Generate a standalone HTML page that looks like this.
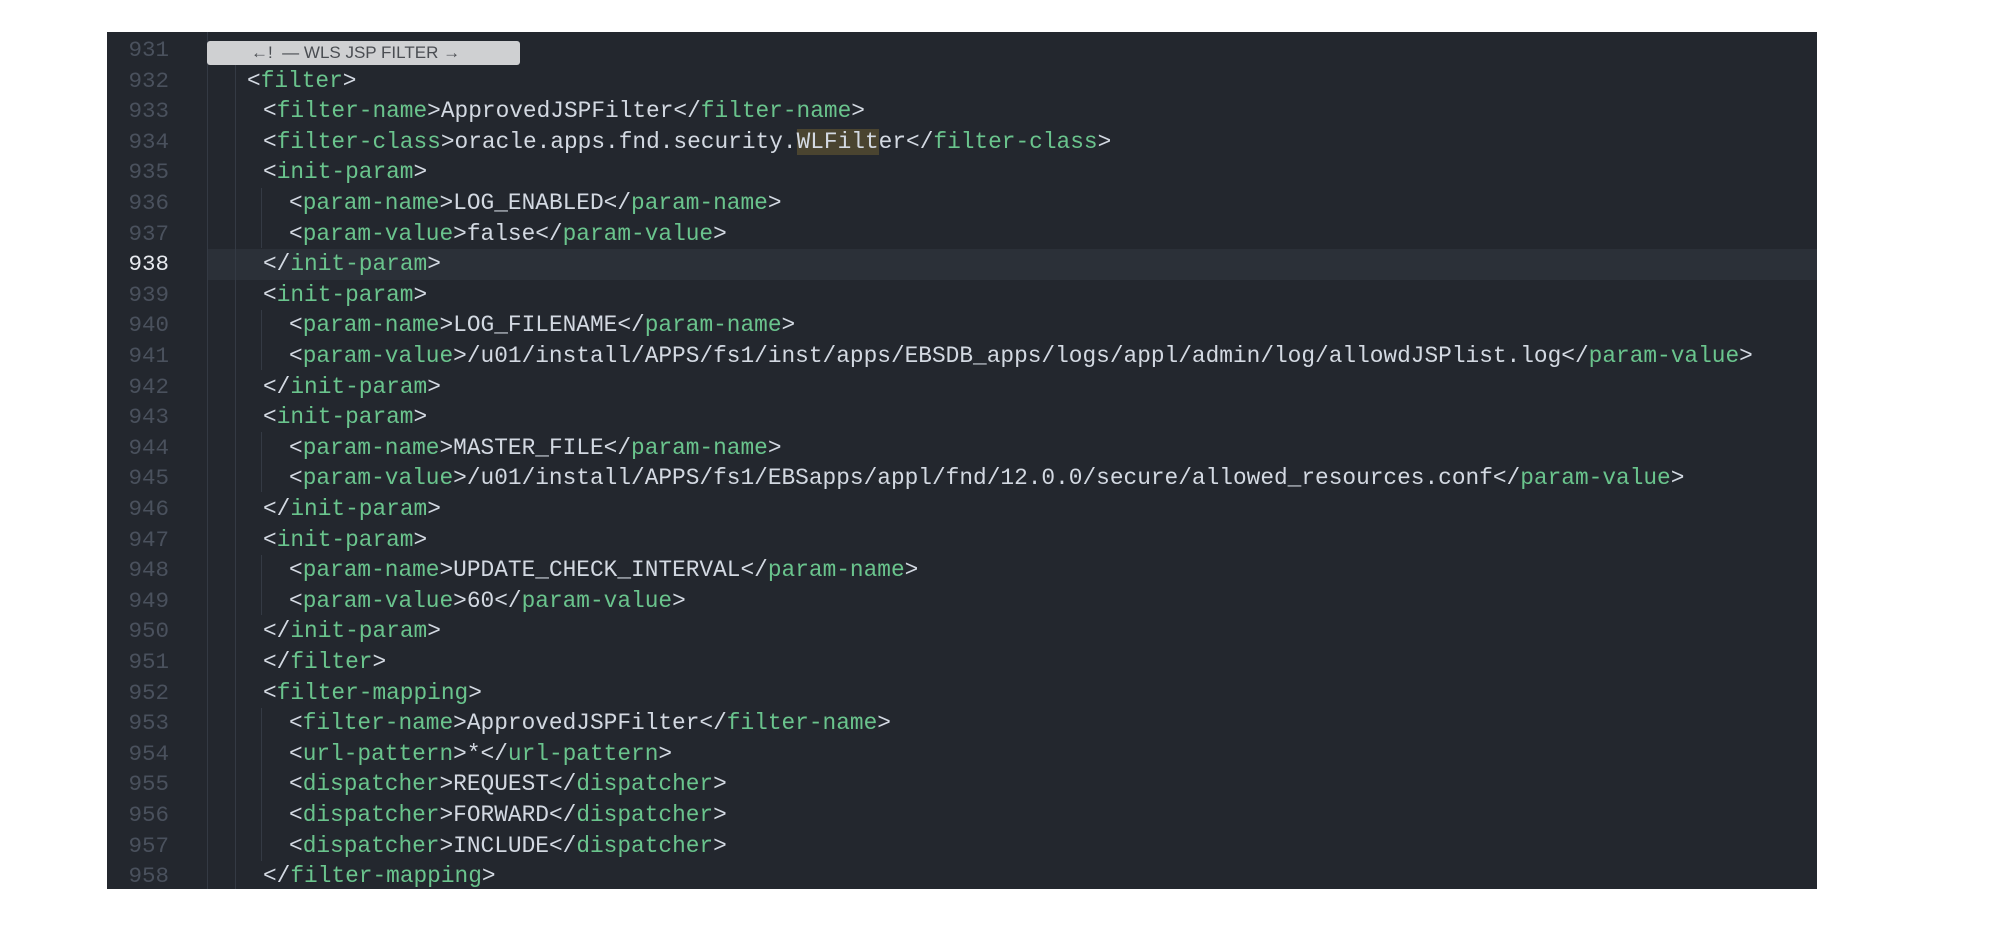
<!DOCTYPE html>
<html><head><meta charset="utf-8"><style>
html,body{margin:0;padding:0;background:#fff;width:2000px;height:937px;overflow:hidden}
#ed{position:absolute;left:107px;top:32px;width:1710px;height:857px;background:#23272e;overflow:hidden}
.ln{position:absolute;width:62px;text-align:right;left:0;color:#4a515d;font:22.5px/30.6px "Liberation Mono",monospace}
.cur{color:#e6e9ee}
.c{position:absolute;white-space:pre;font:22.8px/30.6px "Liberation Mono",monospace;color:#d3d9e2;letter-spacing:0}
.t{color:#6ac48d}
.hl{background:#4a4430}
.g{position:absolute;width:1px;background:#343a44}
#row{position:absolute;left:100px;right:0;top:217.2px;height:30.6px;background:#2b3038}
#fold{position:absolute;left:100px;top:9px;width:313px;height:24px;background:#cfd0d2;border-radius:3px;color:#4a4d52;font:17px/24px "Liberation Sans",sans-serif;padding-left:44px;box-sizing:border-box}
</style></head><body>
<div id="ed">
<div id="row"></div>
<div class="g" style="left:100px;top:0;height:857px"></div>
<div class="g" style="left:128px;top:30px;height:827px"></div>
<div class="g" style="left:154px;top:156px;height:60px"></div>
<div class="g" style="left:154px;top:278px;height:60px"></div>
<div class="g" style="left:154px;top:400px;height:60px"></div>
<div class="g" style="left:154px;top:523px;height:60px"></div>
<div class="g" style="left:154px;top:676px;height:153px"></div>
<div id="fold">←!&nbsp;&nbsp;— WLS JSP FILTER →</div>
<div class="ln" style="top:3px">931</div>
<div class="ln" style="top:33.6px">932</div>
<div class="ln" style="top:64.2px">933</div>
<div class="ln" style="top:94.8px">934</div>
<div class="ln" style="top:125.4px">935</div>
<div class="ln" style="top:156px">936</div>
<div class="ln" style="top:186.6px">937</div>
<div class="ln cur" style="top:217.2px">938</div>
<div class="ln" style="top:247.8px">939</div>
<div class="ln" style="top:278.4px">940</div>
<div class="ln" style="top:309px">941</div>
<div class="ln" style="top:339.6px">942</div>
<div class="ln" style="top:370.2px">943</div>
<div class="ln" style="top:400.8px">944</div>
<div class="ln" style="top:431.4px">945</div>
<div class="ln" style="top:462px">946</div>
<div class="ln" style="top:492.6px">947</div>
<div class="ln" style="top:523.2px">948</div>
<div class="ln" style="top:553.8px">949</div>
<div class="ln" style="top:584.4px">950</div>
<div class="ln" style="top:615px">951</div>
<div class="ln" style="top:645.6px">952</div>
<div class="ln" style="top:676.2px">953</div>
<div class="ln" style="top:706.8px">954</div>
<div class="ln" style="top:737.4px">955</div>
<div class="ln" style="top:768px">956</div>
<div class="ln" style="top:798.6px">957</div>
<div class="ln" style="top:829.2px">958</div>

<div class="c" style="left:140px;top:33.6px">&lt;<span class="t">filter</span>&gt;</div>
<div class="c" style="left:156px;top:64.2px">&lt;<span class="t">filter-name</span>&gt;ApprovedJSPFilter&lt;/<span class="t">filter-name</span>&gt;</div>
<div class="c" style="left:156px;top:94.8px">&lt;<span class="t">filter-class</span>&gt;oracle.apps.fnd.security.<span class="hl">WLFilt</span>er&lt;/<span class="t">filter-class</span>&gt;</div>
<div class="c" style="left:156px;top:125.4px">&lt;<span class="t">init-param</span>&gt;</div>
<div class="c" style="left:182px;top:156px">&lt;<span class="t">param-name</span>&gt;LOG_ENABLED&lt;/<span class="t">param-name</span>&gt;</div>
<div class="c" style="left:182px;top:186.6px">&lt;<span class="t">param-value</span>&gt;false&lt;/<span class="t">param-value</span>&gt;</div>
<div class="c" style="left:156px;top:217.2px">&lt;/<span class="t">init-param</span>&gt;</div>
<div class="c" style="left:156px;top:247.8px">&lt;<span class="t">init-param</span>&gt;</div>
<div class="c" style="left:182px;top:278.4px">&lt;<span class="t">param-name</span>&gt;LOG_FILENAME&lt;/<span class="t">param-name</span>&gt;</div>
<div class="c" style="left:182px;top:309px">&lt;<span class="t">param-value</span>&gt;/u01/install/APPS/fs1/inst/apps/EBSDB_apps/logs/appl/admin/log/allowdJSPlist.log&lt;/<span class="t">param-value</span>&gt;</div>
<div class="c" style="left:156px;top:339.6px">&lt;/<span class="t">init-param</span>&gt;</div>
<div class="c" style="left:156px;top:370.2px">&lt;<span class="t">init-param</span>&gt;</div>
<div class="c" style="left:182px;top:400.8px">&lt;<span class="t">param-name</span>&gt;MASTER_FILE&lt;/<span class="t">param-name</span>&gt;</div>
<div class="c" style="left:182px;top:431.4px">&lt;<span class="t">param-value</span>&gt;/u01/install/APPS/fs1/EBSapps/appl/fnd/12.0.0/secure/allowed_resources.conf&lt;/<span class="t">param-value</span>&gt;</div>
<div class="c" style="left:156px;top:462px">&lt;/<span class="t">init-param</span>&gt;</div>
<div class="c" style="left:156px;top:492.6px">&lt;<span class="t">init-param</span>&gt;</div>
<div class="c" style="left:182px;top:523.2px">&lt;<span class="t">param-name</span>&gt;UPDATE_CHECK_INTERVAL&lt;/<span class="t">param-name</span>&gt;</div>
<div class="c" style="left:182px;top:553.8px">&lt;<span class="t">param-value</span>&gt;60&lt;/<span class="t">param-value</span>&gt;</div>
<div class="c" style="left:156px;top:584.4px">&lt;/<span class="t">init-param</span>&gt;</div>
<div class="c" style="left:156px;top:615px">&lt;/<span class="t">filter</span>&gt;</div>
<div class="c" style="left:156px;top:645.6px">&lt;<span class="t">filter-mapping</span>&gt;</div>
<div class="c" style="left:182px;top:676.2px">&lt;<span class="t">filter-name</span>&gt;ApprovedJSPFilter&lt;/<span class="t">filter-name</span>&gt;</div>
<div class="c" style="left:182px;top:706.8px">&lt;<span class="t">url-pattern</span>&gt;*&lt;/<span class="t">url-pattern</span>&gt;</div>
<div class="c" style="left:182px;top:737.4px">&lt;<span class="t">dispatcher</span>&gt;REQUEST&lt;/<span class="t">dispatcher</span>&gt;</div>
<div class="c" style="left:182px;top:768px">&lt;<span class="t">dispatcher</span>&gt;FORWARD&lt;/<span class="t">dispatcher</span>&gt;</div>
<div class="c" style="left:182px;top:798.6px">&lt;<span class="t">dispatcher</span>&gt;INCLUDE&lt;/<span class="t">dispatcher</span>&gt;</div>
<div class="c" style="left:156px;top:829.2px">&lt;/<span class="t">filter-mapping</span>&gt;</div>
</div>
</body></html>
